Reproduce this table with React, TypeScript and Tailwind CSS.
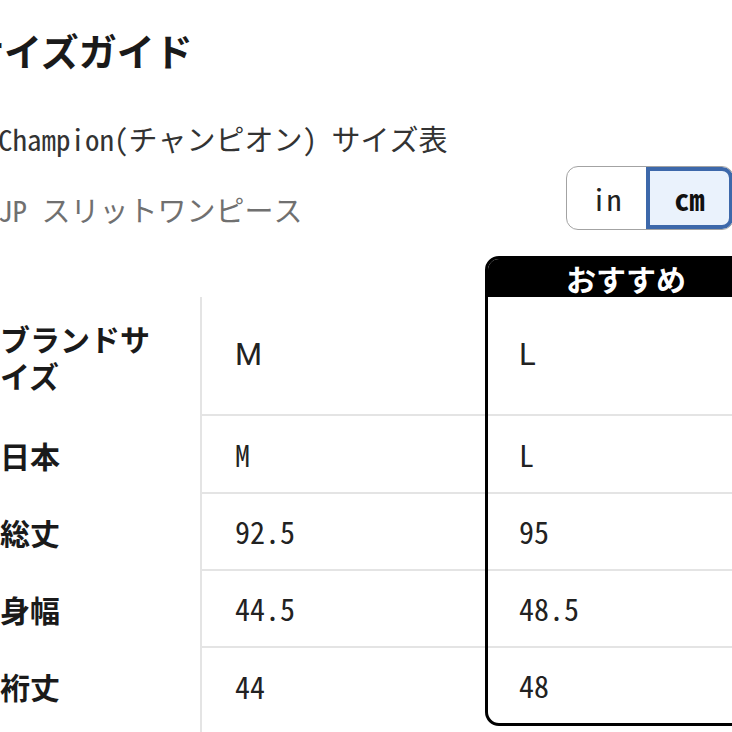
import React from 'react';

const jp = "font-['Noto_Sans_CJK_JP','Noto_Sans',sans-serif]";
const mono = "font-['Noto_Sans_Mono_CJK_JP','Noto_Sans_CJK_JP',monospace]";

const rows = [
    { label: 'ブランドサイズ', m: 'M', l: 'L', h: 'h-[119px]', sans: true },
    { label: '日本', m: 'M', l: 'L', h: 'h-[78px]' },
    { label: '総丈', m: '92.5', l: '95', h: 'h-[77px]' },
    { label: '身幅', m: '44.5', l: '48.5', h: 'h-[77px]' },
    { label: '裄丈', m: '44', l: '48', h: 'h-[77px]' },
];

export default function App() {
    return (
        <div className="w-[732px] h-[732px] overflow-hidden bg-white">
            <div className="w-[770px]">
                {/* Title */}
                <h1 className={`${jp} pt-[27px] -ml-[34px] text-[38px] leading-[46px] font-bold text-[#1a1a1a]`}>
                    サイズガイド
                </h1>

                <p className={`${mono} mt-[47px] -ml-[2px] text-[29px] leading-[36px] text-[#333]`}>
                    Champion(チャンピオン) サイズ表
                </p>

                <div className="mt-[10px] flex items-start justify-between pr-[36px]">
                    <p className={`${mono} mt-[25px] -ml-[2px] text-[29px] leading-[36px] text-[#707070]`}>
                        JP スリットワンピース
                    </p>
                    {/* in / cm toggle */}
                    <div className="flex h-[64px] w-[168px] rounded-[12px] border border-[#a3a3a3] overflow-hidden">
                        <div className={`${mono} flex-1 flex items-center justify-center text-[30px] text-[#222]`}>in</div>
                        <div className={`${mono} flex-1 flex items-center justify-center rounded-r-[11px] border-[4px] border-[#3d68aa] bg-[#eaf2fc] text-[30px] font-bold text-[#111]`}>
                            cm
                        </div>
                    </div>
                </div>

                {/* Size table */}
                <div className="mt-[26px] flex">
                    <div className="w-[200px] pt-[41px]">
                        {rows.map((r) => (
                            <div key={r.label} className={`${r.h} flex items-center`}>
                                <span className={`${jp} max-w-[170px] text-[30px] leading-[37px] font-bold text-[#1a1a1a]`}>{r.label}</span>
                            </div>
                        ))}
                    </div>

                    <div className="w-[285px] pt-[41px]">
                        <div className="border-l-2 border-[#e4e4e4] pb-[10px]">
                            {rows.map((r, i) => (
                                <div
                                    key={r.label}
                                    className={`${r.h} flex items-center pl-[33px] ${i < rows.length - 1 ? 'border-b-2 border-[#e4e4e4]' : ''}`}
                                >
                                    <span className={`${r.sans ? "font-['Roboto',sans-serif] text-[31px]" : `${mono} text-[30px]`} text-[#222]`}>{r.m}</span>
                                </div>
                            ))}
                        </div>
                    </div>

                    {/* Recommended column */}
                    <div className="w-[282px] self-start rounded-[14px] border-[3px] border-black overflow-hidden">
                        <div className={`${jp} h-[38px] bg-black flex items-center justify-center text-[30px] font-bold text-white`}>
                            おすすめ
                        </div>
                        {rows.map((r, i) => (
                            <div
                                key={r.label}
                                className={`${i === rows.length - 1 ? 'h-[75px]' : r.h} flex items-center pl-[31px] ${i < rows.length - 1 ? 'border-b-2 border-[#e4e4e4]' : ''}`}
                            >
                                <span className={`${r.sans ? "font-['Roboto',sans-serif] text-[31px]" : `${mono} text-[30px]`} text-[#222]`}>{r.l}</span>
                            </div>
                        ))}
                    </div>
                </div>
            </div>
        </div>
    );
}
